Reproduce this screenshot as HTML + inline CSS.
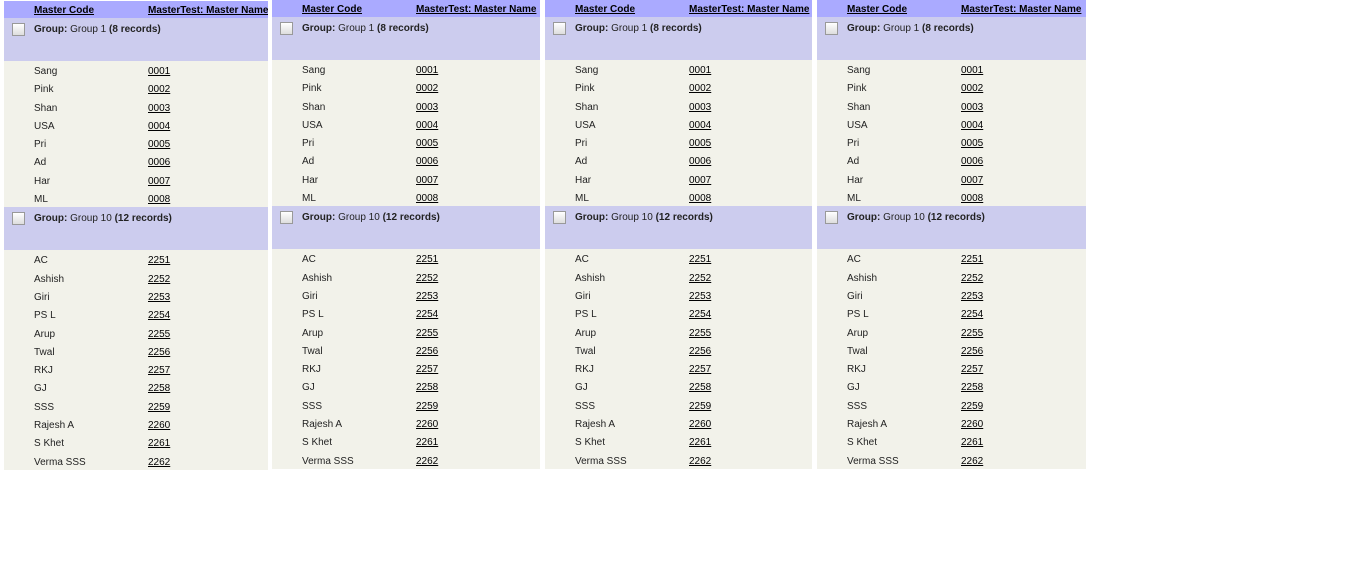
<!DOCTYPE html>
<html><head><style>
body{margin:0;width:1360px;height:573px;background:#fff;font-family:"Liberation Sans",Arial,sans-serif;font-size:10px;color:#222;position:relative;overflow:hidden}
.p{position:absolute;background:#f2f2ea;overflow:hidden;height:469px}
.h{height:17px;background:#aaaaff;position:relative;font-weight:bold;font-size:10px;white-space:nowrap}
.h span{position:absolute;top:4px;text-decoration:underline;color:#000}
.g{height:43px;background:#ccccee;position:relative}
.g .cb{position:absolute;left:8px;top:5px;width:11px;height:11px;border:1px solid #999;background:linear-gradient(#fff,#ddd)}
.g .t{position:absolute;left:30px;top:6px}
.g b{font-weight:bold}
.r{height:18.3px;position:relative}
.r span{position:absolute;top:5px;left:30px}
.r u{position:absolute;top:5px;left:144px;color:#000}
</style></head><body>
<div class="p" style="left:4px;top:1px;width:264px">
<div class="h"><span style="left:30px">Master Code</span><span style="left:144px">MasterTest: Master Name</span></div>
<div class="g"><div class="cb"></div><div class="t"><b>Group:</b> Group 1 <b>(8 records)</b></div></div>
<div class="r"><span>Sang</span><u>0001</u></div><div class="r"><span>Pink</span><u>0002</u></div><div class="r"><span>Shan</span><u>0003</u></div><div class="r"><span>USA</span><u>0004</u></div><div class="r"><span>Pri</span><u>0005</u></div><div class="r"><span>Ad</span><u>0006</u></div><div class="r"><span>Har</span><u>0007</u></div><div class="r"><span>ML</span><u>0008</u></div>
<div class="g"><div class="cb"></div><div class="t"><b>Group:</b> Group 10 <b>(12 records)</b></div></div>
<div class="r"><span>AC</span><u>2251</u></div><div class="r"><span>Ashish</span><u>2252</u></div><div class="r"><span>Giri</span><u>2253</u></div><div class="r"><span>PS L</span><u>2254</u></div><div class="r"><span>Arup</span><u>2255</u></div><div class="r"><span>Twal</span><u>2256</u></div><div class="r"><span>RKJ</span><u>2257</u></div><div class="r"><span>GJ</span><u>2258</u></div><div class="r"><span>SSS</span><u>2259</u></div><div class="r"><span>Rajesh A</span><u>2260</u></div><div class="r"><span>S Khet</span><u>2261</u></div><div class="r"><span>Verma SSS</span><u>2262</u></div>
</div>
<div class="p" style="left:272px;top:0;width:268px">
<div class="h"><span style="left:30px">Master Code</span><span style="left:144px">MasterTest: Master Name</span></div>
<div class="g"><div class="cb"></div><div class="t"><b>Group:</b> Group 1 <b>(8 records)</b></div></div>
<div class="r"><span>Sang</span><u>0001</u></div><div class="r"><span>Pink</span><u>0002</u></div><div class="r"><span>Shan</span><u>0003</u></div><div class="r"><span>USA</span><u>0004</u></div><div class="r"><span>Pri</span><u>0005</u></div><div class="r"><span>Ad</span><u>0006</u></div><div class="r"><span>Har</span><u>0007</u></div><div class="r"><span>ML</span><u>0008</u></div>
<div class="g"><div class="cb"></div><div class="t"><b>Group:</b> Group 10 <b>(12 records)</b></div></div>
<div class="r"><span>AC</span><u>2251</u></div><div class="r"><span>Ashish</span><u>2252</u></div><div class="r"><span>Giri</span><u>2253</u></div><div class="r"><span>PS L</span><u>2254</u></div><div class="r"><span>Arup</span><u>2255</u></div><div class="r"><span>Twal</span><u>2256</u></div><div class="r"><span>RKJ</span><u>2257</u></div><div class="r"><span>GJ</span><u>2258</u></div><div class="r"><span>SSS</span><u>2259</u></div><div class="r"><span>Rajesh A</span><u>2260</u></div><div class="r"><span>S Khet</span><u>2261</u></div><div class="r"><span>Verma SSS</span><u>2262</u></div>
</div>
<div class="p" style="left:545px;top:0;width:267px">
<div class="h"><span style="left:30px">Master Code</span><span style="left:144px">MasterTest: Master Name</span></div>
<div class="g"><div class="cb"></div><div class="t"><b>Group:</b> Group 1 <b>(8 records)</b></div></div>
<div class="r"><span>Sang</span><u>0001</u></div><div class="r"><span>Pink</span><u>0002</u></div><div class="r"><span>Shan</span><u>0003</u></div><div class="r"><span>USA</span><u>0004</u></div><div class="r"><span>Pri</span><u>0005</u></div><div class="r"><span>Ad</span><u>0006</u></div><div class="r"><span>Har</span><u>0007</u></div><div class="r"><span>ML</span><u>0008</u></div>
<div class="g"><div class="cb"></div><div class="t"><b>Group:</b> Group 10 <b>(12 records)</b></div></div>
<div class="r"><span>AC</span><u>2251</u></div><div class="r"><span>Ashish</span><u>2252</u></div><div class="r"><span>Giri</span><u>2253</u></div><div class="r"><span>PS L</span><u>2254</u></div><div class="r"><span>Arup</span><u>2255</u></div><div class="r"><span>Twal</span><u>2256</u></div><div class="r"><span>RKJ</span><u>2257</u></div><div class="r"><span>GJ</span><u>2258</u></div><div class="r"><span>SSS</span><u>2259</u></div><div class="r"><span>Rajesh A</span><u>2260</u></div><div class="r"><span>S Khet</span><u>2261</u></div><div class="r"><span>Verma SSS</span><u>2262</u></div>
</div>
<div class="p" style="left:817px;top:0;width:269px">
<div class="h"><span style="left:30px">Master Code</span><span style="left:144px">MasterTest: Master Name</span></div>
<div class="g"><div class="cb"></div><div class="t"><b>Group:</b> Group 1 <b>(8 records)</b></div></div>
<div class="r"><span>Sang</span><u>0001</u></div><div class="r"><span>Pink</span><u>0002</u></div><div class="r"><span>Shan</span><u>0003</u></div><div class="r"><span>USA</span><u>0004</u></div><div class="r"><span>Pri</span><u>0005</u></div><div class="r"><span>Ad</span><u>0006</u></div><div class="r"><span>Har</span><u>0007</u></div><div class="r"><span>ML</span><u>0008</u></div>
<div class="g"><div class="cb"></div><div class="t"><b>Group:</b> Group 10 <b>(12 records)</b></div></div>
<div class="r"><span>AC</span><u>2251</u></div><div class="r"><span>Ashish</span><u>2252</u></div><div class="r"><span>Giri</span><u>2253</u></div><div class="r"><span>PS L</span><u>2254</u></div><div class="r"><span>Arup</span><u>2255</u></div><div class="r"><span>Twal</span><u>2256</u></div><div class="r"><span>RKJ</span><u>2257</u></div><div class="r"><span>GJ</span><u>2258</u></div><div class="r"><span>SSS</span><u>2259</u></div><div class="r"><span>Rajesh A</span><u>2260</u></div><div class="r"><span>S Khet</span><u>2261</u></div><div class="r"><span>Verma SSS</span><u>2262</u></div>
</div>
</body></html>
